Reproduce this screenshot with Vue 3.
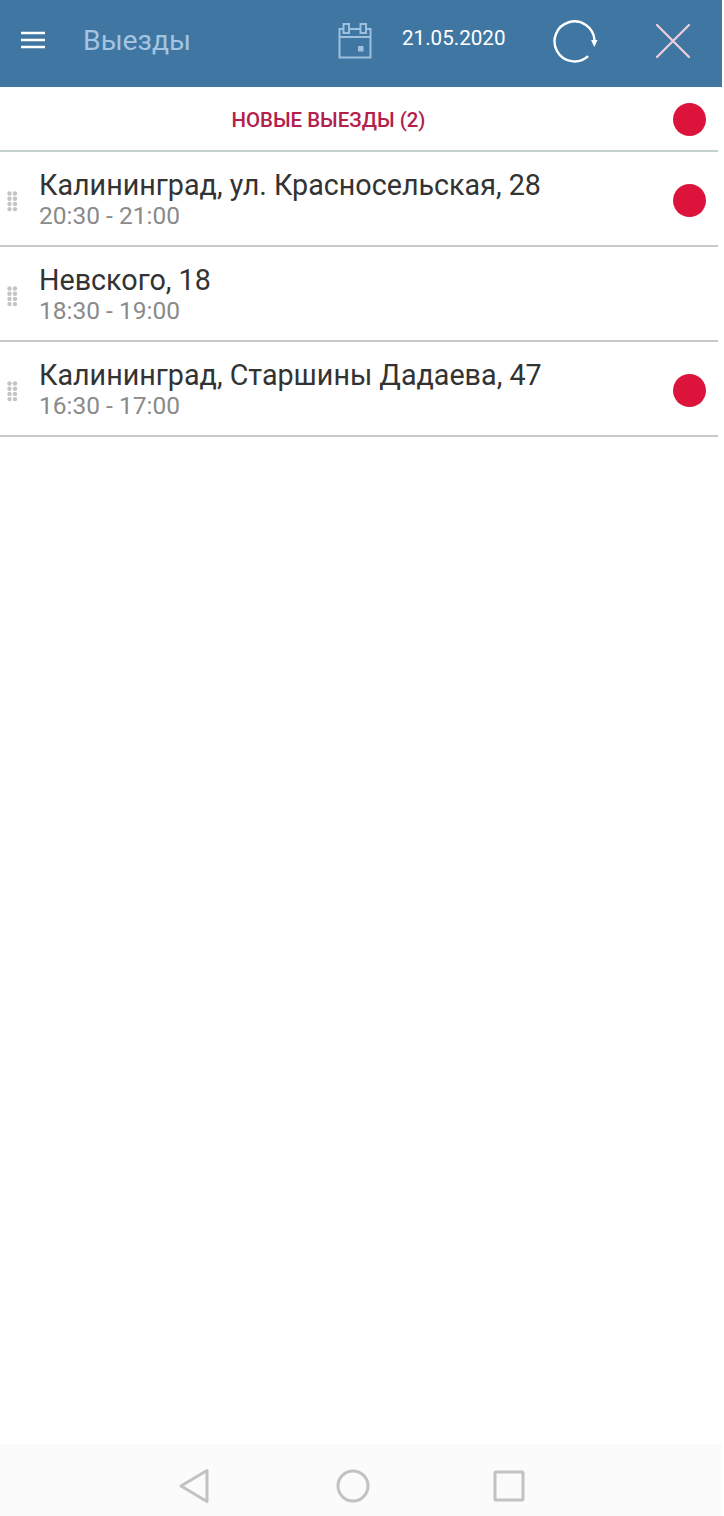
<script setup>
const trips = [
  { id: 1, address: 'Калининград, ул. Красносельская, 28', time: '20:30 - 21:00', isNew: true },
  { id: 2, address: 'Невского, 18', time: '18:30 - 19:00', isNew: false },
  { id: 3, address: 'Калининград, Старшины Дадаева, 47', time: '16:30 - 17:00', isNew: true }
]
</script>

<template>
  <div class="page">
    <header class="topbar">
      <svg class="menu" width="24" height="18" viewBox="0 0 24 18">
        <path d="M0 2h24M0 9h24M0 16h24" stroke="#fff" stroke-width="2.4" fill="none" />
      </svg>
      <span class="title">Выезды</span>
      <svg class="calendar" width="34" height="36" viewBox="0 0 34 36" fill="none" stroke="#9cc0dd" stroke-width="2">
        <path d="M5 6H1.5v28.5h31V6H28M1.5 14h31M11 6h11" />
        <rect x="5.5" y="1" width="5.5" height="9" />
        <rect x="22.5" y="1" width="5.5" height="9" />
        <rect x="20" y="23" width="5.5" height="5.5" fill="#9cc0dd" stroke="none" />
      </svg>
      <span class="date">21.05.2020</span>
      <svg class="refresh" width="46" height="44" viewBox="0 0 46 44" fill="none">
        <path d="M35.1 37.1A20 20 0 1 1 41.5 21" stroke="#fff" stroke-width="2.4" />
        <path d="M38 21h6.5l-3.2 7z" fill="#fff" />
      </svg>
      <svg class="close" width="36" height="36" viewBox="0 0 36 36">
        <path d="M2 2l32 32M34 2L2 34" stroke="#f0cfdc" stroke-width="2.2" fill="none" stroke-linecap="round" />
      </svg>
    </header>

    <div class="section">
      <span class="section-title">НОВЫЕ ВЫЕЗДЫ (2)</span>
      <span class="dot section-dot"></span>
    </div>

    <ul class="trips">
      <li v-for="trip in trips" :key="trip.id" class="trip">
        <svg class="grip" width="11" height="21" viewBox="0 0 11 21" fill="#c4c4c4">
          <template v-for="row in 4" :key="row">
            <circle cx="2.5" :cy="2.5 + (row - 1) * 5.2" r="2.2" />
            <circle cx="8" :cy="2.5 + (row - 1) * 5.2" r="2.2" />
          </template>
        </svg>
        <div class="info">
          <div class="address">{{ trip.address }}</div>
          <div class="time">{{ trip.time }}</div>
        </div>
        <span v-if="trip.isNew" class="dot row-dot"></span>
      </li>
    </ul>

    <nav class="navbar">
      <svg width="34" height="36" viewBox="0 0 34 36" fill="none" stroke="#c2c2c2" stroke-width="3" stroke-linejoin="round">
        <path d="M29 2.5v31L3 18z" />
      </svg>
      <svg width="34" height="34" viewBox="0 0 34 34" fill="none" stroke="#c2c2c2" stroke-width="3">
        <circle cx="17" cy="17" r="15" />
      </svg>
      <svg class="nav-square" width="32" height="32" viewBox="0 0 32 32" fill="none" stroke="#c2c2c2" stroke-width="3" stroke-linejoin="round">
        <rect x="2" y="2" width="28" height="28" rx="1" />
      </svg>
    </nav>
  </div>
</template>

<style>
body {
  background: #fff;
}
</style>

<style scoped>
.page {
  width: 722px;
  height: 1516px;
  display: flex;
  flex-direction: column;
  font-family: Roboto, "Liberation Sans", sans-serif;
  background: #fff;
}

.topbar {
  height: 87px;
  flex: none;
  display: flex;
  align-items: center;
  padding-left: 21px;
  box-sizing: border-box;
  background: #3f76a2;
}

.menu {
  margin-top: -7px;
  flex: none;
}

.title {
  margin: -6px 0 0 38px;
  width: 255px;
  font-size: 28.3px;
  color: #a3c5e2;
}

.calendar {
  margin-top: -6px;
  flex: none;
}

.date {
  margin: -12px 0 0 30px;
  font-size: 20.6px;
  color: #fff;
}

.refresh {
  margin: -6px 0 0 48px;
  flex: none;
}

.close {
  margin: -6px 0 0 56px;
  flex: none;
}

.section {
  height: 65px;
  flex: none;
  width: 718px;
  box-sizing: border-box;
  display: flex;
  align-items: center;
  justify-content: center;
  border-bottom: 2px solid #c3d0d0;
  position: relative;
}

.section-title {
  margin: 2px 0 0 -61px;
  font-size: 20.4px;
  font-weight: 500;
  color: #b3204a;
}

.section-dot {
  position: absolute;
  right: 12px;
  top: 16px;
}

.dot {
  width: 33px;
  height: 33px;
  flex: none;
  border-radius: 50%;
  background: #dc143c;
}

.row-dot {
  margin-top: 4px;
}

.trips {
  margin: 0;
  padding: 0;
  list-style: none;
  flex: 1;
}

.trip {
  width: 718px;
  height: 95px;
  box-sizing: border-box;
  display: flex;
  align-items: center;
  padding: 0 12px 0 7px;
  border-bottom: 2px solid #c8c8c8;
}

.grip {
  flex: none;
  margin-top: 5px;
}

.info {
  flex: 1;
  margin: 3px 0 0 21px;
}

.address {
  font-size: 28.7px;
  line-height: 31px;
  color: #333;
}

.time {
  font-size: 24.5px;
  line-height: 29px;
  color: #8a8a8a;
}

.navbar {
  height: 72px;
  flex: none;
  box-sizing: border-box;
  display: flex;
  align-items: center;
  justify-content: center;
  gap: 124px;
  background: #fbfbfb;
  padding: 12px 19px 0 0;
}

.nav-square {
  margin-left: -1px;
}
</style>
